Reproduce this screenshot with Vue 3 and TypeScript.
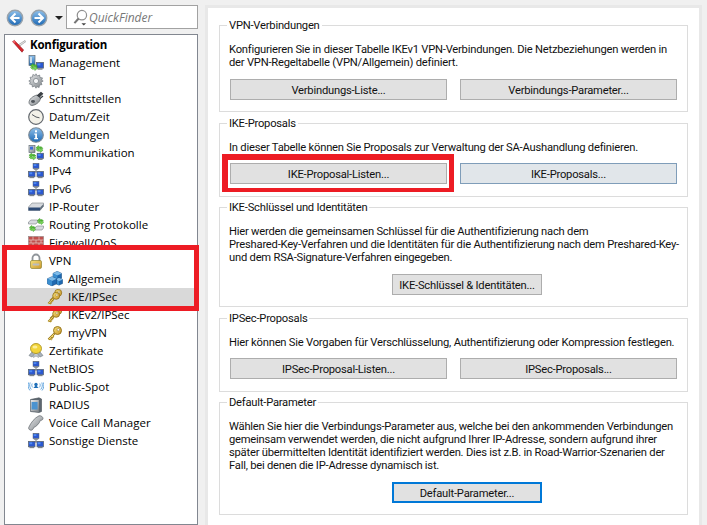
<script setup lang="ts">
interface Row { label: string; icon: string; level: number; selected?: boolean }
interface Btn { label: string; kind?: string; boxed?: boolean }
interface Group { title: string; lines: string[]; buttons: Btn[]; single?: boolean; offset?: boolean }

const rows: Row[] = [
  { label: 'Konfiguration', icon: 'tools', level: 0 },
  { label: 'Management', icon: 'mgmt', level: 1 },
  { label: 'IoT', icon: 'gear', level: 1 },
  { label: 'Schnittstellen', icon: 'plug', level: 1 },
  { label: 'Datum/Zeit', icon: 'clock', level: 1 },
  { label: 'Meldungen', icon: 'info', level: 1 },
  { label: 'Kommunikation', icon: 'comm', level: 1 },
  { label: 'IPv4', icon: 'net', level: 1 },
  { label: 'IPv6', icon: 'net', level: 1 },
  { label: 'IP-Router', icon: 'router', level: 1 },
  { label: 'Routing Protokolle', icon: 'routing', level: 1 },
  { label: 'Firewall/QoS', icon: 'wall', level: 1 },
  { label: 'VPN', icon: 'lock', level: 1 },
  { label: 'Allgemein', icon: 'cubes', level: 2 },
  { label: 'IKE/IPSec', icon: 'keys', level: 2, selected: true },
  { label: 'IKEv2/IPSec', icon: 'keys', level: 2 },
  { label: 'myVPN', icon: 'key', level: 2 },
  { label: 'Zertifikate', icon: 'cert', level: 1 },
  { label: 'NetBIOS', icon: 'net', level: 1 },
  { label: 'Public-Spot', icon: 'wifi', level: 1 },
  { label: 'RADIUS', icon: 'server', level: 1 },
  { label: 'Voice Call Manager', icon: 'phone', level: 1 },
  { label: 'Sonstige Dienste', icon: 'net', level: 1 },
]

const groups: Group[] = [
  {
    title: 'VPN-Verbindungen',
    lines: [
      'Konfigurieren Sie in dieser Tabelle IKEv1 VPN-Verbindungen. Die Netzbeziehungen werden in',
      'der VPN-Regeltabelle (VPN/Allgemein) definiert.',
    ],
    buttons: [{ label: 'Verbindungs-Liste...' }, { label: 'Verbindungs-Parameter...' }],
  },
  {
    title: 'IKE-Proposals',
    single: true,
    lines: ['In dieser Tabelle können Sie Proposals zur Verwaltung der SA-Aushandlung definieren.'],
    buttons: [{ label: 'IKE-Proposal-Listen...', boxed: true }, { label: 'IKE-Proposals...', kind: 'hover' }],
  },
  {
    title: 'IKE-Schlüssel und Identitäten',
    offset: true,
    lines: [
      'Hier werden die gemeinsamen Schlüssel für die Authentifizierung nach dem',
      'Preshared-Key-Verfahren und die Identitäten für die Authentifizierung nach dem Preshared-Key-',
      'und dem RSA-Signature-Verfahren eingegeben.',
    ],
    buttons: [{ label: 'IKE-Schlüssel & Identitäten...' }],
  },
  {
    title: 'IPSec-Proposals',
    single: true,
    lines: ['Hier können Sie Vorgaben für Verschlüsselung, Authentifizierung oder Kompression festlegen.'],
    buttons: [{ label: 'IPSec-Proposal-Listen...' }, { label: 'IPSec-Proposals...' }],
  },
  {
    title: 'Default-Parameter',
    offset: true,
    lines: [
      'Wählen Sie hier die Verbindungs-Parameter aus, welche bei den ankommenden Verbindungen',
      'gemeinsam verwendet werden, die nicht aufgrund Ihrer IP-Adresse, sondern aufgrund ihrer',
      'später übermittelten Identität identifiziert werden. Dies ist z.B. in Road-Warrior-Szenarien der',
      'Fall, bei denen die IP-Adresse dynamisch ist.',
    ],
    buttons: [{ label: 'Default-Parameter...', kind: 'focus' }],
  },
]
</script>

<template>
  <div class="app">
    <svg class="defs" width="0" height="0" aria-hidden="true">
      <defs>
        <linearGradient id="gBlue" x1="0" y1="0" x2="0" y2="1">
          <stop offset="0" stop-color="#8fc0ea" /><stop offset="1" stop-color="#1c68b4" />
        </linearGradient>
        <linearGradient id="gGold" x1="0" y1="0" x2="1" y2="1">
          <stop offset="0" stop-color="#f6e27c" /><stop offset="1" stop-color="#c9962a" />
        </linearGradient>
        <linearGradient id="gGrey" x1="0" y1="0" x2="1" y2="1">
          <stop offset="0" stop-color="#e6e8ea" /><stop offset="1" stop-color="#7f8488" />
        </linearGradient>
        <symbol id="i-tools" viewBox="0 0 16 16">
          <path d="M8 8 15 3.500l1 1L9 9.500z" fill="#e9e9e9" stroke="#8a8a8a" stroke-width=".6" />
          <path d="M2.600 4.600 4.400 3.400 13.600 13l-1.600 2.200z" fill="#d8232a" stroke="#8d1116" stroke-width=".6" />
          <path d="M2.600 4.600 4.400 3.400 6 5 4 6.200z" fill="#f0646a" />
        </symbol>
        <symbol id="i-monitor" viewBox="0 0 8 8">
          <rect x=".5" y=".5" width="7" height="5.600" fill="#2b58d0" stroke="#5a6470" stroke-width=".8" />
          <rect x="1.400" y="1.400" width="3" height="2" fill="#4f8cf0" />
          <rect x="1.500" y="6.300" width="5" height="1.400" fill="#7b838b" />
        </symbol>
        <symbol id="i-net" viewBox="0 0 16 16">
          <path d="M8 6v3M4 9h8" stroke="#6a737b" fill="none" />
          <use href="#i-monitor" x="4.500" y="0" width="7" height="7" />
          <use href="#i-monitor" x="0" y="8" width="7.600" height="7.600" />
          <use href="#i-monitor" x="8.400" y="8" width="7.600" height="7.600" />
        </symbol>
        <symbol id="i-arrows" viewBox="0 0 10 10">
          <path d="M.5 3.500 4 .5v1.800h3.400L9.500 4.500H4v2z" fill="#5cc23c" stroke="#2f8a1e" stroke-width=".5" />
          <path d="M9.500 6.500 6 9.500V7.700H2.600L.5 5.500H6v-2z" fill="#7ad85a" stroke="#2f8a1e" stroke-width=".5" />
        </symbol>
        <symbol id="i-mgmt" viewBox="0 0 16 16">
          <rect x="1" y="0.500" width="6" height="10" fill="url(#gBlue)" stroke="#5f6a74" stroke-width=".7" />
          <rect x="2" y="2" width="2" height="6" fill="#c8dcec" />
          <use href="#i-monitor" x="8" y="7" width="8" height="8" />
          <use href="#i-arrows" x="2" y="8" width="8" height="8" />
        </symbol>
        <symbol id="i-comm" viewBox="0 0 16 16">
          <rect x="1" y="0.500" width="6" height="7" fill="url(#gGrey)" stroke="#5f6a74" stroke-width=".7" />
          <rect x="2" y="1.600" width="3" height="3" fill="#3b6bd8" />
          <use href="#i-monitor" x="8.500" y="7.500" width="7.500" height="8" />
          <use href="#i-arrows" x="0.500" y="7.500" width="8" height="8" />
          <use href="#i-arrows" x="7.500" y="0" width="8" height="8" />
        </symbol>
        <symbol id="i-gear" viewBox="0 0 16 16">
          <path d="M8 .8 9.300 3l2.300-1 .4 2.500 2.500.4-1 2.300L15.200 8 13 9.300l1 2.300-2.500.4-.4 2.500-2.300-1L8 15.200 6.700 13l-2.300 1-.4-2.500-2.500-.4 1-2.300L.8 8 3 6.700 2 4.400l2.500-.4.4-2.500 2.300 1z" fill="url(#gGrey)" stroke="#737a80" stroke-width=".7" />
          <circle cx="8" cy="8" r="2.600" fill="#f4f5f6" stroke="#80868c" stroke-width=".8" />
        </symbol>
        <symbol id="i-plug" viewBox="0 0 16 16">
          <path d="M1 11.500C1 8 5 5 9 4l3.500 3.500C12 11 8 14 4 14.500 2.500 14.500 1 13 1 11.500z" fill="url(#gGrey)" stroke="#555b60" stroke-width=".7" />
          <path d="M9.500 4.500 13 1.500l1.500 1.200-3 3zM12 7.500l3-2.500" stroke="#3a3f44" stroke-width="1.200" fill="#3a3f44" />
          <ellipse cx="5" cy="10.500" rx="2" ry="1.400" fill="#50565c" />
        </symbol>
        <symbol id="i-clock" viewBox="0 0 16 16">
          <circle cx="8" cy="8" r="7.300" fill="#f3f1e8" stroke="#63686e" stroke-width="1.200" />
          <path d="M8 8 4 5.500M8 8l3.500.8" stroke="#55595e" stroke-width="1" fill="none" />
        </symbol>
        <symbol id="i-info" viewBox="0 0 16 16">
          <circle cx="8" cy="8" r="7.300" fill="url(#gBlue)" stroke="#7c8a96" stroke-width="1.100" />
          <rect x="7" y="3.300" width="2" height="2" fill="#fff" />
          <path d="M6.300 6.500H9v4.400h1v1.300H6.200v-1.300h1V7.800H6.300z" fill="#fff" />
        </symbol>
        <symbol id="i-router" viewBox="0 0 16 16">
          <path d="M0.500 8 4 4h11.500v3L12 11.500H.5z" fill="#d7dade" stroke="#7c8388" stroke-width=".6" />
          <path d="M.5 8.500H12v3H.5z" fill="#2d4a75" />
          <path d="M12 8.500 15.500 5v2.500L12 11.500z" fill="#63707e" />
        </symbol>
        <symbol id="i-routing" viewBox="0 0 16 16">
          <path d="M.5 5 3 3h6.500v2L8 7H.5z" fill="#d7dade" stroke="#7c8388" stroke-width=".6" />
          <path d="M6.500 11 9 9h6.500v2L14 13H6.500z" fill="#d7dade" stroke="#7c8388" stroke-width=".6" />
          <use href="#i-arrows" x="9" y="1" width="7" height="7" />
          <use href="#i-arrows" x="1" y="8" width="7" height="7" />
        </symbol>
        <symbol id="i-wall" viewBox="0 0 16 16">
          <rect x="0.500" y="1.500" width="15" height="13" fill="#c0504d" stroke="#8f8080" stroke-width=".6" />
          <path d="M.5 5h15M.5 8h15M.5 11.500h15M5 1.500V5M11 1.500V5M3 5v3M8 5v3M13 5v3M5 8v3.500M11 8v3.500M3 11.500v3M8 11.500v3M13 11.500v3" stroke="#e8c9c4" stroke-width=".7" fill="none" />
        </symbol>
        <symbol id="i-lock" viewBox="0 0 16 16">
          <path d="M4.500 8V5a3.500 3.500 0 0 1 7 0v3" fill="none" stroke="#8f9499" stroke-width="1.800" />
          <rect x="2.500" y="7.500" width="11" height="8" rx="1.400" fill="url(#gGold)" stroke="#8f8430" stroke-width=".7" />
          <rect x="4.500" y="10.500" width="7" height="2" rx="1" fill="#b9bcc0" />
        </symbol>
        <symbol id="i-cube" viewBox="0 0 8 8">
          <path d="M4 .3 7.700 2v4L4 7.700.3 6V2z" fill="#1f69b0" stroke="#123f70" stroke-width=".4" />
          <path d="M4 .3 7.700 2 4 3.700.3 2z" fill="#7ebbe8" />
          <path d="M.3 2 4 3.700v4L.3 6z" fill="#3b8fd0" />
        </symbol>
        <symbol id="i-cubes" viewBox="0 0 16 16">
          <use href="#i-cube" x="5.500" y="0" width="9.500" height="9.500" />
          <use href="#i-cube" x="8" y="6" width="8" height="9" />
          <use href="#i-cube" x="0" y="5" width="10" height="10.500" />
        </symbol>
        <symbol id="i-key" viewBox="0 0 16 16">
          <path d="M7.500 8.500 1.500 14.500M3.200 12.800l1.800 1.800M5 11l1.500 1.500" stroke="#9a7a1e" stroke-width="2.200" fill="none" />
          <path d="M7.500 8.500 1.500 14.500M3.200 12.800l1.800 1.800M5 11l1.500 1.500" stroke="#f1d56a" stroke-width="1" fill="none" />
          <circle cx="10.500" cy="5.500" r="4" fill="url(#gGold)" stroke="#8f6d14" stroke-width=".9" />
          <circle cx="11.300" cy="4.700" r="1.200" fill="#fff" stroke="#8f6d14" stroke-width=".5" />
        </symbol>
        <symbol id="i-keys" viewBox="0 0 16 16">
          <use href="#i-key" x="2" y="-1" width="14" height="14" />
          <use href="#i-key" x="0" y="2" width="14" height="14" />
        </symbol>
        <symbol id="i-cert" viewBox="0 0 16 16">
          <path d="M1 12.500 4 9l2 2.500-2 2.500zM15 12.500 12 9l-2 2.500 2 2.500z" fill="#a9b2bb" stroke="#6f7880" stroke-width=".6" />
          <path d="M6 11 8 10l2 1 .6 3.500-2.600-1.500-2.600 1.500z" fill="#c4ccd4" stroke="#7a838b" stroke-width=".5" />
          <ellipse cx="8" cy="5.500" rx="5.500" ry="5" fill="#f2d43a" stroke="#a48c16" stroke-width=".8" />
          <ellipse cx="7" cy="4" rx="2.500" ry="1.500" fill="#fbee9a" />
        </symbol>
        <symbol id="i-wifi" viewBox="0 0 16 16">
          <path d="M8 6 5.500 9h5z" fill="#1f6fb8" />
          <circle cx="8" cy="5.500" r="1.700" fill="#1f6fb8" />
          <path d="M4.200 4.500c-.8 1.500-.4 3 .6 4M2.200 3.500C1.200 6 1.600 8.500 3.300 10.500M.6 3.500C-.4 6.500.2 9.500 2 11.500M11.800 4.500c.8 1.500.4 3-.6 4M13.800 3.500c1 2.500.6 5-1.100 7M15.400 3.500c1 3 .4 6-1.400 8" stroke="#5aa0dc" fill="none" stroke-width=".9" />
        </symbol>
        <symbol id="i-server" viewBox="0 0 16 16">
          <path d="M2.500 2.500 11 .8l2.500 1.200v12.500L11 15.500l-8.500-1z" fill="#5d6770" stroke="#474f56" stroke-width=".6" />
          <path d="M2.800 3h8v12l-8-1z" fill="url(#gGrey)" />
          <path d="M3.600 5h6v7.500h-6z" fill="#4b93d0" />
        </symbol>
        <symbol id="i-phone" viewBox="0 0 16 16">
          <path d="M11 .8c2-.5 3.800 1 4 2.500.2 1.200-1.400 2.300-2.600 2C11.500 8.300 8.500 11.500 5.500 12.700 5.500 14 4 15.600 2.600 15.200 1 14.800.3 13.500.8 12.300 3 7.500 6.500 3 11 .8z" fill="url(#gGrey)" stroke="#5d6369" stroke-width=".7" />
        </symbol>
      </defs>
    </svg>

    <aside class="side">
      <div class="tools">
        <svg class="nav" viewBox="0 0 18 18">
          <circle cx="9" cy="9" r="7.700" fill="url(#gBlue)" stroke="#9aa3ab" stroke-width="1.400" />
          <path d="M9.500 4.500 5 9l4.500 4.500M5.500 9H13.500" fill="none" stroke="#fff" stroke-width="2" />
        </svg>
        <svg class="nav" viewBox="0 0 18 18">
          <circle cx="9" cy="9" r="7.700" fill="url(#gBlue)" stroke="#9aa3ab" stroke-width="1.400" />
          <path d="M8.500 4.500 13 9l-4.500 4.500M12.500 9H4.500" fill="none" stroke="#fff" stroke-width="2" />
        </svg>
        <span class="caret"></span>
        <div class="search">
          <svg class="lens" viewBox="0 0 16 18">
            <circle cx="9.500" cy="6.500" r="5" fill="#fff" stroke="#8f8f8f" stroke-width="1.300" />
            <path d="M6 10 1.500 15" stroke="#777" stroke-width="2.200" />
            <path d="M9 15h5l-2.500 2.500z" fill="#444" />
          </svg>
          <span>QuickFinder</span>
        </div>
      </div>
      <div class="tree">
        <div
          v-for="row in rows"
          :key="row.label"
          class="row"
          :class="['lv' + row.level, { sel: row.selected }]"
        >
          <svg class="ico"><use :href="'#i-' + row.icon" /></svg>
          <span class="label">{{ row.label }}</span>
        </div>
        <div class="mark tree-mark"></div>
      </div>
    </aside>

    <main class="panel">
      <section v-for="g in groups" :key="g.title" class="group" :class="{ single: g.single }">
        <div class="legend">{{ g.title }}</div>
        <p v-for="l in g.lines" :key="l" class="line">{{ l }}</p>
        <div class="btns" :class="{ offset: g.offset }">
          <div v-for="b in g.buttons" :key="b.label" class="btn-wrap">
            <button class="btn" :class="b.kind">{{ b.label }}</button>
            <div v-if="b.boxed" class="mark btn-mark"></div>
          </div>
        </div>
      </section>
    </main>
  </div>
</template>

<style>
html, body { margin: 0; background: #f0f0f0; }
</style>

<style scoped>
.app {
  position: relative;
  display: flex;
  width: 707px;
  height: 525px;
  overflow: hidden;
  background: #f0f0f0;
  font-family: "Open Sans", "Noto Sans", sans-serif;
  font-size: 11.5px;
  color: #000;
}
.defs { position: absolute; }
.side {
  width: 194px;
  margin-left: 4px;
  flex: none;
  display: flex;
  flex-direction: column;
}
.tools {
  height: 34px;
  flex: none;
  display: flex;
  align-items: flex-start;
}
.nav { width: 18px; height: 18px; margin-top: 9px; margin-right: 6px; }
.nav:first-child { margin-left: 2px; }
.caret {
  width: 0;
  height: 0;
  margin: 16px 0 0 1px;
  border: 4px solid transparent;
  border-top-color: #222;
  border-bottom: 0;
}
.search {
  flex: none;
  box-sizing: border-box;
  width: 132px;
  height: 24px;
  margin: 5px 0 0 auto;
  padding-left: 6px;
  display: flex;
  align-items: center;
  gap: 1px;
  background: #fff;
  border: 1px solid #a2a2a2;
  color: #777;
  font-style: italic;
  font-size: 12px;
}
.lens { width: 15px; height: 17px; flex: none; }
.tree {
  position: relative;
  flex: 1;
  box-sizing: border-box;
  padding: 1px 2px;
  background: #fff;
  border: 1px solid #828790;
}
.row {
  height: 18px;
  display: flex;
  align-items: center;
  white-space: nowrap;
  gap: 5px;
}
.label { margin-top: -2px; }
.lv0 { padding-left: 3px; gap: 4px; font-weight: 700; letter-spacing: -0.2px; }
.lv1 { padding-left: 21px; }
.lv2 { padding-left: 40px; }
.sel { background: #d9d9d9; }
.ico { width: 16px; height: 16px; flex: none; }
.mark { position: absolute; box-sizing: border-box; border: 5px solid #ed1c24; pointer-events: none; }
.tree-mark { left: -3px; top: 210px; width: 197px; height: 66px; }
.panel {
  flex: none;
  box-sizing: border-box;
  width: 497px;
  margin: 5px 0 0 7px;
  padding: 17px 11px 0;
  background: #fff;
  border: 3px solid #e8e8e8;
  border-bottom: 0;
  display: flex;
  flex-direction: column;
  gap: 11px;
  font-family: Roboto, "Liberation Sans", sans-serif;
  font-size: 11.2px;
  letter-spacing: -0.22px;
  color: #111;
}
.group {
  position: relative;
  padding: 17px 10px 11px 9px;
  border: 1px solid #dcdcdc;
}
.group.single { padding-bottom: 12px; margin-bottom: -1px; }
.legend {
  position: absolute;
  left: 7px;
  top: -8px;
  padding: 0 2px;
  background: #fff;
  line-height: 16px;
  white-space: nowrap;
}
.line { margin: 0; line-height: 13px; height: 13px; white-space: nowrap; }
.btns { display: flex; gap: 13px; padding-left: 1px; margin-top: 10px; }
.single .btns { margin-top: 9px; }
.btns.offset { padding-left: 163px; }
.btn-wrap { position: relative; }
.btn {
  display: block;
  box-sizing: border-box;
  width: 217px;
  height: 21px;
  padding: 1px 0 0;
  background: #e1e1e1;
  border: 1px solid #adadad;
  font: inherit;
  letter-spacing: inherit;
  color: #111;
  white-space: nowrap;
}
.offset .btn { width: 150px; }
.btn.hover { background: #e1e6ea; border-color: #7f9db9; }
.btn.focus { border: 2px solid #0078d7; }
.btn-mark {
  left: -8px;
  right: -7px;
  top: -9px;
  bottom: -8px;
  border-width: 6px 5px 4px 6px;
}
</style>
